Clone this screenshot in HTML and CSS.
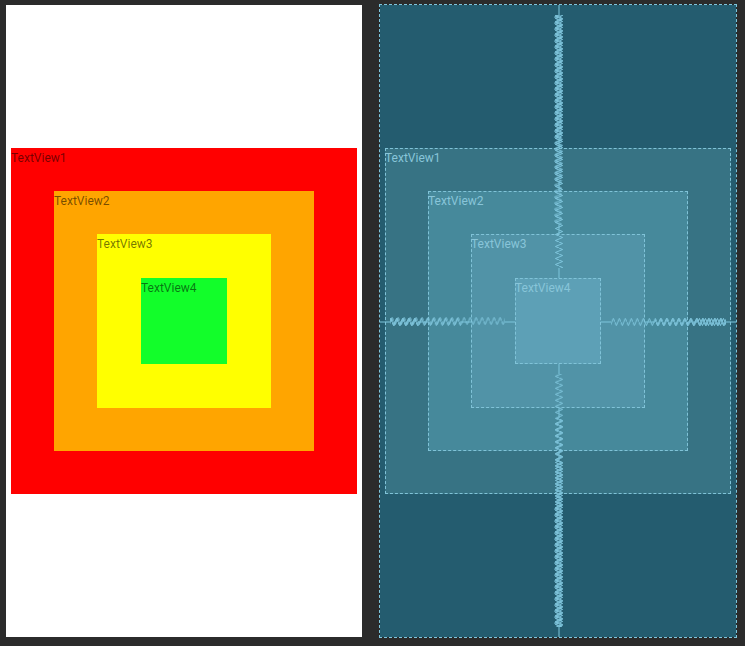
FILE: index.html
```html
<!DOCTYPE html>
<html>
<head>
<meta charset="utf-8">
<link rel="stylesheet" href="styles.css">
</head>
<body>
<div class="stage">
  <div class="phone">
    <div class="box b1 red">
      <span class="label">TextView1</span>
      <div class="box b2 orange">
        <span class="label">TextView2</span>
        <div class="box b3 yellow">
          <span class="label">TextView3</span>
          <div class="box b4 green">
            <span class="label">TextView4</span>
          </div>
        </div>
      </div>
    </div>
  </div>
  <div class="blueprint">
    <div class="box b1 bp bp1">
      <span class="label">TextView1</span>
      <div class="box b2 bp bp2">
        <span class="label">TextView2</span>
        <div class="box b3 bp bp3">
          <span class="label">TextView3</span>
          <div class="box b4 bp bp4">
            <span class="label">TextView4</span>
          </div>
        </div>
      </div>
    </div>
    <svg class="springs" width="356" height="632" viewBox="0 0 356 632">
      <defs>
        <pattern id="v0" patternUnits="userSpaceOnUse" x="174" y="0" width="10" height="6"><path d="M5 0L8.6 1.5L1.4 4.5L5 6" class="zz"/></pattern>
        <pattern id="v1" patternUnits="userSpaceOnUse" x="174" y="0.8" width="10" height="6"><path d="M5 0L8.6 1.5L1.4 4.5L5 6" class="zz"/></pattern>
        <pattern id="v2" patternUnits="userSpaceOnUse" x="173" y="1.6" width="10" height="6"><path d="M5 0L8.6 1.5L1.4 4.5L5 6" class="zz"/></pattern>
        <pattern id="v3" patternUnits="userSpaceOnUse" x="174" y="3" width="10" height="6"><path d="M5 0L8.6 1.5L1.4 4.5L5 6" class="zz"/></pattern>
        <pattern id="h0" patternUnits="userSpaceOnUse" x="0" y="312" width="6" height="10"><path d="M0 5L1.5 8.6L4.5 1.4L6 5" class="zz"/></pattern>
        <pattern id="h1" patternUnits="userSpaceOnUse" x="0.8" y="312" width="6" height="10"><path d="M0 5L1.5 8.6L4.5 1.4L6 5" class="zz"/></pattern>
        <pattern id="h2" patternUnits="userSpaceOnUse" x="1.6" y="311" width="6" height="10"><path d="M0 5L1.5 8.6L4.5 1.4L6 5" class="zz"/></pattern>
        <pattern id="h3" patternUnits="userSpaceOnUse" x="3" y="312" width="6" height="10"><path d="M0 5L1.5 8.6L4.5 1.4L6 5" class="zz"/></pattern>
      </defs>
      <!-- top springs -->
      <rect x="173" y="10" width="11" height="123" fill="url(#v0)"/>
      <rect x="173" y="10" width="11" height="166" fill="url(#v1)"/>
      <rect x="173" y="10" width="11" height="209" fill="url(#v2)"/>
      <rect x="173" y="10" width="11" height="253" fill="url(#v3)"/>
      <!-- bottom springs -->
      <rect x="173" y="499" width="11" height="123" fill="url(#v2)"/>
      <rect x="173" y="456" width="11" height="166" fill="url(#v3)"/>
      <rect x="173" y="413" width="11" height="209" fill="url(#v0)"/>
      <rect x="173" y="369" width="11" height="253" fill="url(#v1)"/>
      <!-- left springs -->
      <rect x="10" y="311" width="28" height="11" fill="url(#h0)"/>
      <rect x="10" y="311" width="71" height="11" fill="url(#h1)"/>
      <rect x="10" y="311" width="115" height="11" fill="url(#h2)"/>
      <!-- right springs -->
      <rect x="318" y="311" width="28" height="11" fill="url(#h3)"/>
      <rect x="275" y="311" width="71" height="11" fill="url(#h0)"/>
      <rect x="231" y="311" width="115" height="11" fill="url(#h1)"/>
      <path class="zz" d="M179 0V10M179 133V143M179 176V186M179 219V229M179 263V273
        M179 359V369M179 403V413M179 446V456M179 489V499M179 622V632
        M0 317H10M38 317H48M81 317H91M125 317H135
        M221 317H231M265 317H275M308 317H318M346 317H356"/>
    </svg>
  </div>
</div>
</body>
</html>
```

FILE: styles.css
```css
html, body {
  margin: 0;
  padding: 0;
  background: #2b2b2b;
}
.stage {
  width: 745px;
  height: 646px;
  box-sizing: border-box;
  padding: 5px 0 0 6px;
  display: flex;
  gap: 18px;
  align-items: flex-start;
}
.phone, .blueprint {
  width: 356px;
  height: 632px;
  display: grid;
  place-items: center;
}
.phone {
  background: #ffffff;
}
.blueprint {
  position: relative;
  background: #245c6f;
  outline: 1px dashed #7ec6dd;
}
.box {
  display: grid;
  box-sizing: border-box;
}
.box > * {
  grid-area: 1 / 1;
}
.box > .label {
  align-self: start;
  justify-self: start;
  font-family: Roboto, "Noto Sans", sans-serif;
  font-size: 12px;
  line-height: 14px;
  margin-top: 3px;
  color: rgba(0, 0, 0, 0.55);
  white-space: nowrap;
}
.box > .box {
  align-self: center;
  justify-self: center;
}
.b1 { width: 346px; height: 346px; }
.b2 { width: 260px; height: 260px; }
.b3 { width: 174px; height: 174px; }
.b4 { width: 86px; height: 86px; }
.red { background: #ff0000; }
.orange { background: #ffa500; }
.yellow { background: #ffff00; }
.green { background: #12fe2a; }

.bp {
  border: 1px dashed #80c3d8;
}
.bp > .label {
  color: #88c5d9;
  margin-top: 2px;
  margin-left: -1px;
}
.bp1 { background: #377384; }
.bp2 { background: #46899b; }
.bp3 { background: #5193a7; }
.bp4 { background: #5da0b6; }

.springs {
  position: absolute;
  left: 0;
  top: 0;
}
.zz {
  fill: none;
  stroke: #7fc6dd;
  stroke-width: 1;
}
```
